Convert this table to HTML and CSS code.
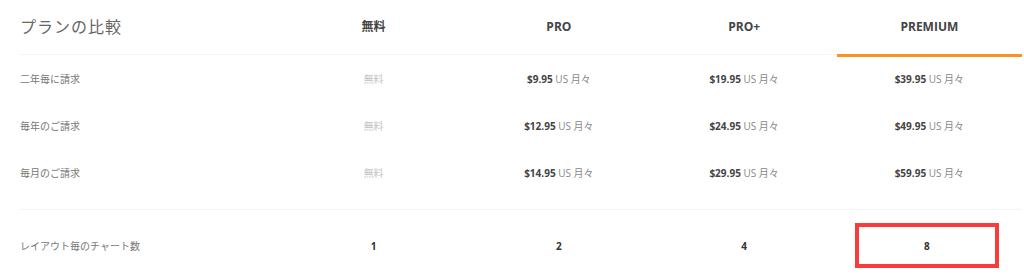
FILE: index.html
```html
<!DOCTYPE html>
<html lang="ja">
<head>
    <meta charset="UTF-8">
    <meta name="viewport" content="width=device-width, initial-scale=1.0">
    <title>プランの比較</title>
    <link rel="stylesheet" href="styles.css">
</head>
<body>
    <div class="compare">
        <div class="row head">
            <div class="cell label title">プランの比較</div>
            <div class="cell plan">無料</div>
            <div class="cell plan">PRO</div>
            <div class="cell plan">PRO+</div>
            <div class="cell plan active">PREMIUM</div>
        </div>

        <div class="group">
            <div class="row price">
                <div class="cell label">二年毎に請求</div>
                <div class="cell free">無料</div>
                <div class="cell"><b>$9.95</b> <span class="unit">US 月々</span></div>
                <div class="cell"><b>$19.95</b> <span class="unit">US 月々</span></div>
                <div class="cell"><b>$39.95</b> <span class="unit">US 月々</span></div>
            </div>
            <div class="row price">
                <div class="cell label">毎年のご請求</div>
                <div class="cell free">無料</div>
                <div class="cell"><b>$12.95</b> <span class="unit">US 月々</span></div>
                <div class="cell"><b>$24.95</b> <span class="unit">US 月々</span></div>
                <div class="cell"><b>$49.95</b> <span class="unit">US 月々</span></div>
            </div>
            <div class="row price">
                <div class="cell label">毎月のご請求</div>
                <div class="cell free">無料</div>
                <div class="cell"><b>$14.95</b> <span class="unit">US 月々</span></div>
                <div class="cell"><b>$29.95</b> <span class="unit">US 月々</span></div>
                <div class="cell"><b>$59.95</b> <span class="unit">US 月々</span></div>
            </div>
        </div>

        <div class="row feature">
            <div class="cell label">レイアウト毎のチャート数</div>
            <div class="cell num">1</div>
            <div class="cell num">2</div>
            <div class="cell num">4</div>
            <div class="cell num"><span class="mark">8</span></div>
        </div>
    </div>
</body>
</html>
```

FILE: styles.css
```css
body {
    margin: 0;
    background-color: #ffffff;
    font-family: 'Open Sans', 'Noto Sans CJK JP', sans-serif;
    color: #444;
}

.compare {
    width: 1002px;
    margin-left: 20px;
}

.row {
    display: grid;
    grid-template-columns: 261px repeat(4, 185.25px);
    align-items: center;
}

.cell {
    text-align: center;
    font-size: 10px;
}

.label {
    text-align: left;
    color: #777;
}

/* header */
.head {
    align-items: start;
    height: 55px;
}

.head .cell {
    box-sizing: border-box;
    height: 55px;
    line-height: 54px;
    border-bottom: 1px solid #eef5f5;
}

.title {
    font-size: 16px;
    color: #666;
    letter-spacing: 1px;
}

.plan {
    font-size: 12px;
    font-weight: bold;
    color: #444;
}

.head .active {
    height: 57px;
    border-bottom: 3px solid #f7931e;
}

/* prices */
.group {
    padding-bottom: 13px;
    border-bottom: 1px solid #eef4f8;
}

.price {
    height: 47px;
}

.price b {
    color: #444;
}

.unit {
    color: #888;
}

.free {
    color: #c4c4c4;
}

/* features */
.feature {
    height: 71px;
}

.num {
    font-weight: bold;
    color: #333;
}

.mark {
    box-sizing: border-box;
    display: inline-flex;
    align-items: center;
    justify-content: center;
    width: 144px;
    height: 45px;
    margin-left: -5px;
    border: 4px solid #f93b3b;
}
```
